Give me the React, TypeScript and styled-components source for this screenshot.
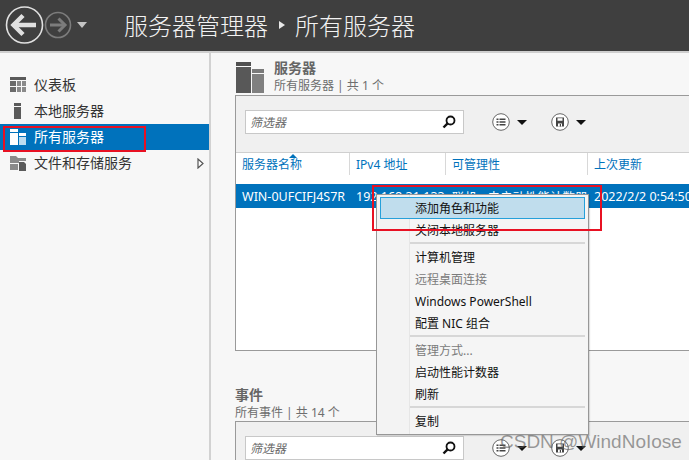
import React from 'react';
import styled, { createGlobalStyle } from 'styled-components';

const FONT = '"Noto Sans", "Noto Sans CJK SC", sans-serif';

const GlobalStyle = createGlobalStyle`
  html, body {
    margin: 0;
    padding: 0;
    background: #f7f7f7;
  }
  * {
    box-sizing: border-box;
  }
`;

const NAV_ITEMS = [
  { label: '仪表板', icon: 'dashboard' },
  { label: '本地服务器', icon: 'local' },
  { label: '所有服务器', icon: 'all', active: true },
  { label: '文件和存储服务', icon: 'files', arrow: true },
];

const COLUMNS = [
  { label: '服务器名称', width: 114, sorted: true },
  { label: 'IPv4 地址', width: 96 },
  { label: '可管理性', width: 142 },
  { label: '上次更新', width: 110 },
];

const CELLS = [
  { text: 'WIN-0UFCIFJ4S7R', width: 114 },
  { text: '192.168.31.133', width: 96 },
  { text: '联机 - 未启动性能计数器', width: 142 },
  { text: '2022/2/2 0:54:50', width: 110 },
];

const MENU = [
  { label: '添加角色和功能', highlighted: true },
  { label: '关闭本地服务器' },
  { divider: true },
  { label: '计算机管理' },
  { label: '远程桌面连接', disabled: true },
  { label: 'Windows PowerShell' },
  { label: '配置 NIC 组合' },
  { divider: true },
  { label: '管理方式...', disabled: true },
  { label: '启动性能计数器' },
  { label: '刷新' },
  { divider: true },
  { label: '复制' },
];

const NavIcon = ({ type, active }: { type: string; active?: boolean }) => {
  const dark = active ? '#ffffff' : '#5a5a5a';
  const soft = active ? '#bcdcf0' : '#7d7d7d';
  if (type === 'dashboard') {
    return (
      <svg width="16" height="16" viewBox="0 0 16 16">
        <rect y="0" width="16" height="3" fill="#5a5a5a" />
        <rect y="4" width="6" height="5" fill="#6a6a6a" />
        <rect x="7" y="4" width="4" height="5" fill="#8a8a8a" />
        <rect x="12" y="4" width="4" height="5" fill="#8a8a8a" />
        <rect y="10" width="6" height="5" fill="#6a6a6a" />
        <rect x="7" y="10" width="4" height="5" fill="#8a8a8a" />
        <rect x="12" y="10" width="4" height="5" fill="#8a8a8a" />
      </svg>
    );
  }
  if (type === 'local') {
    return (
      <svg width="16" height="16" viewBox="0 0 16 16">
        <rect x="4" y="0" width="7" height="3" fill="#5a5a5a" />
        <rect x="4" y="4" width="7" height="12" fill="#5a5a5a" />
      </svg>
    );
  }
  if (type === 'all') {
    return (
      <svg width="16" height="16" viewBox="0 0 16 16">
        <rect x="0" y="0" width="8" height="3" fill={dark} />
        <rect x="0" y="4" width="8" height="12" fill={dark} />
        <rect x="9" y="4" width="7" height="3" fill={dark} />
        <rect x="9" y="8" width="7" height="8" fill={soft} />
      </svg>
    );
  }
  return (
    <svg width="16" height="16" viewBox="0 0 16 16">
      <path d="M0 1h6l2 2h8v3H9v2H0z" fill="#8a8a8a" />
      <rect x="0" y="9" width="8" height="6" fill="#8a8a8a" />
      <path d="M9 7h5l2 2v7H9z" fill="#5a5a5a" />
    </svg>
  );
};

const ServerGlyph = () => (
  <svg width="29" height="31" viewBox="0 0 29 31">
    <rect x="0" y="0" width="15" height="4" fill="#505050" />
    <rect x="0" y="5" width="15" height="26" fill="#585858" />
    <rect x="16" y="7" width="12" height="4" fill="#7a7a7a" />
    <rect x="16" y="12" width="12" height="19" fill="#808080" />
  </svg>
);

const SearchGlyph = () => (
  <svg width="14" height="14" viewBox="0 0 14 14">
    <circle cx="8.5" cy="5.5" r="4" fill="none" stroke="#111" strokeWidth="1.8" />
    <path d="M5.6 8.4 1.5 12.5" stroke="#111" strokeWidth="2.4" />
  </svg>
);

const ListGlyph = () => (
  <svg width="18" height="18" viewBox="0 0 18 18">
    <circle cx="9" cy="9" r="8.3" fill="#fff" stroke="#666" strokeWidth="1" />
    <path d="M4.5 5.5h2v1.6h-2zM4.5 8.2h2v1.6h-2zM4.5 10.9h2v1.6h-2zM7.5 5.5h6v1.6h-6zM7.5 8.2h6v1.6h-6zM7.5 10.9h6v1.6h-6z" fill="#444" />
  </svg>
);

const SaveGlyph = () => (
  <svg width="18" height="18" viewBox="0 0 18 18">
    <circle cx="9" cy="9" r="8.3" fill="#fff" stroke="#666" strokeWidth="1" />
    <path d="M5 4.5h8v9h-8z" fill="#444" />
    <path d="M6.5 5.2h5v2.6h-5zM7 10.5h4v3H7z" fill="#fff" />
    <path d="M8.8 11h1.2v2.5H8.8z" fill="#444" />
  </svg>
);

const ArrowGlyph = () => (
  <svg width="7" height="11" viewBox="0 0 7 11">
    <path d="M1 1v9l5-4.5z" fill="#fff" stroke="#555" strokeWidth="1.2" />
  </svg>
);

const Toolbar = () => (
  <ToolbarRow>
    <SearchBox>
      <FilterText>筛选器</FilterText>
      <SearchGlyph />
    </SearchBox>
    <ToolButton>
      <ListGlyph />
      <Caret />
    </ToolButton>
    <ToolButton>
      <SaveGlyph />
      <Caret />
    </ToolButton>
  </ToolbarRow>
);

export default function App() {
  return (
    <Page>
      <GlobalStyle />
      <Header>
        <svg width="88" height="40" viewBox="0 0 88 40">
          <circle cx="24.5" cy="20" r="18" fill="none" stroke="#e0e0e0" strokeWidth="1.6" />
          <path d="M13 20h23" stroke="#e0e0e0" strokeWidth="4.5" />
          <path d="M23 10.5 13.5 20l9.5 9.5" fill="none" stroke="#e0e0e0" strokeWidth="4.5" />
          <circle cx="58" cy="20" r="12.5" fill="none" stroke="#7c7c7c" strokeWidth="1.6" />
          <path d="M50 20h15" stroke="#7c7c7c" strokeWidth="3" />
          <path d="M58.5 13.5 65 20l-6.5 6.5" fill="none" stroke="#7c7c7c" strokeWidth="3" />
          <path d="M77 17h10l-5 6z" fill="#c4c4c4" />
        </svg>
        <HeaderTitle>
          服务器管理器
          <Crumb />
          所有服务器
        </HeaderTitle>
      </Header>
      <Body>
        <Sidebar>
          {NAV_ITEMS.map((item) => (
            <NavRow key={item.label} $active={item.active}>
              <NavIconSlot>
                <NavIcon type={item.icon} active={item.active} />
              </NavIconSlot>
              {item.label}
              {item.arrow && (
                <NavArrow>
                  <ArrowGlyph />
                </NavArrow>
              )}
            </NavRow>
          ))}
        </Sidebar>
        <Main>
          <SectionHead>
            <ServerGlyph />
            <SectionText>
              <SectionTitle>服务器</SectionTitle>
              <SectionSub>所有服务器 | 共 1 个</SectionSub>
            </SectionText>
          </SectionHead>
          <Panel>
            <Toolbar />
            <ColumnRow>
              {COLUMNS.map((col) => (
                <ColumnCell key={col.label} $width={col.width}>
                  {col.sorted && <SortMark />}
                  {col.label}
                </ColumnCell>
              ))}
            </ColumnRow>
            <DataRow>
              {CELLS.map((cell) => (
                <DataCell key={cell.text} $width={cell.width}>
                  {cell.text}
                </DataCell>
              ))}
            </DataRow>
          </Panel>
          <LowerHead>
            <SectionTitle>事件</SectionTitle>
            <SectionSub>所有事件 | 共 14 个</SectionSub>
          </LowerHead>
          <LowerPanel>
            <Toolbar />
          </LowerPanel>
        </Main>
      </Body>
      <ContextMenu>
        {MENU.map((item, i) =>
          item.divider ? (
            <MenuDivider key={i} />
          ) : (
            <MenuItem key={i} $highlighted={item.highlighted} $disabled={item.disabled}>
              {item.label}
            </MenuItem>
          ),
        )}
      </ContextMenu>
      <SidebarMark />
      <MenuMark />
      <Watermark>CSDN @WindNoIose</Watermark>
    </Page>
  );
}

const Page = styled.div`
  position: relative;
  width: 689px;
  height: 460px;
  overflow: hidden;
  display: flex;
  flex-direction: column;
  background: #f7f7f7;
  font-family: ${FONT};
  font-size: 12px;
  color: #222;
`;

const Header = styled.header`
  flex: none;
  height: 53px;
  padding: 0 0 2px 0;
  display: flex;
  align-items: center;
  gap: 36px;
  background: #3f3f3f;
  border-bottom: 2px solid #cfcfcf;
`;

const HeaderTitle = styled.div`
  display: flex;
  align-items: center;
  font-size: 24px;
  font-weight: 300;
  color: #f2f2f2;
`;

const Crumb = styled.span`
  width: 0;
  height: 0;
  margin: 0 10px 0 11px;
  border-left: 6px solid #e8e8e8;
  border-top: 4px solid transparent;
  border-bottom: 4px solid transparent;
`;

const Body = styled.div`
  flex: 1;
  min-height: 0;
  display: flex;
`;

const Sidebar = styled.nav`
  flex: none;
  width: 211px;
  padding-top: 19px;
  background: #f7f7f7;
  border-right: 2px solid #d2d2d2;
`;

const NavRow = styled.div<{ $active?: boolean }>`
  position: relative;
  height: 26px;
  display: flex;
  align-items: center;
  padding: 0 0 2px 10px;
  font-size: 14px;
  background: ${(p) => (p.$active ? '#0072bc' : 'transparent')};
  color: ${(p) => (p.$active ? '#ffffff' : '#333333')};
`;

const NavIconSlot = styled.span`
  flex: none;
  width: 24px;
  height: 16px;
  margin-top: 2px;
  display: flex;
`;

const NavArrow = styled.span`
  position: absolute;
  right: 5px;
  top: 8px;
  display: flex;
`;

const Main = styled.main`
  flex: 1;
  min-width: 0;
  padding: 9px 0 0 24px;
  background: #f7f7f7;
`;

const SectionHead = styled.div`
  height: 33px;
  padding-left: 1px;
  display: flex;
  gap: 9px;
`;

const SectionText = styled.div`
  display: flex;
  flex-direction: column;
  margin-top: -2px;
`;

const SectionTitle = styled.div`
  height: 18px;
  line-height: 16px;
  font-size: 14px;
  font-weight: 700;
  color: #666666;
`;

const SectionSub = styled.div`
  height: 16px;
  line-height: 16px;
  font-size: 12px;
  color: #6e6e6e;
`;

const Panel = styled.section`
  height: 256px;
  background: #ffffff;
  border: 1px solid #9a9a9a;
  border-right: none;
`;

const ToolbarRow = styled.div`
  height: 57px;
  padding: 14px 0 0 9px;
  display: flex;
  align-items: flex-start;
  background: #f0f0f0;
  border-bottom: 1px solid #cfcfcf;
`;

const SearchBox = styled.div`
  width: 219px;
  height: 24px;
  margin-right: 28px;
  padding: 0 7px 0 4px;
  display: flex;
  align-items: center;
  justify-content: space-between;
  background: #ffffff;
  border: 1px solid #c8c8c8;
`;

const FilterText = styled.span`
  font-style: italic;
  color: #6a6a6a;
`;

const ToolButton = styled.div`
  width: 59px;
  height: 24px;
  display: flex;
  align-items: center;
  gap: 7px;
`;

const Caret = styled.span`
  width: 0;
  height: 0;
  border-top: 5px solid #111;
  border-left: 5px solid transparent;
  border-right: 5px solid transparent;
`;

const ColumnRow = styled.div`
  height: 31px;
  display: flex;
  background: #ffffff;
`;

const ColumnCell = styled.div<{ $width: number }>`
  position: relative;
  flex: none;
  width: ${(p) => p.$width}px;
  height: 22px;
  padding-left: 6px;
  display: flex;
  align-items: center;
  white-space: nowrap;
  color: #0072bc;
  border-right: 1px solid #d8d8d8;

  &:last-child {
    border-right: none;
  }
`;

const SortMark = styled.span`
  position: absolute;
  left: 53px;
  top: 1px;
  width: 0;
  height: 0;
  border-bottom: 4px solid #0072bc;
  border-left: 4px solid transparent;
  border-right: 4px solid transparent;
`;

const DataRow = styled.div`
  height: 24px;
  padding-top: 1px;
  display: flex;
  align-items: center;
  background: #0072bc;
  color: #ffffff;
  font-size: 12.5px;
`;

const DataCell = styled.div<{ $width: number }>`
  flex: none;
  width: ${(p) => p.$width}px;
  padding-left: 6px;
  white-space: nowrap;
  overflow: hidden;
`;

const LowerHead = styled.div`
  height: 34px;
  margin-top: 36px;
`;

const LowerPanel = styled.section`
  height: 60px;
  background: #f0f0f0;
  border: 1px solid #9a9a9a;
  border-right: none;
`;

const ContextMenu = styled.div`
  position: absolute;
  left: 376px;
  top: 194px;
  width: 213px;
  padding: 2px 3px;
  background: linear-gradient(to right, #f3f3f3 32px, #e6e6e6 32px, #e6e6e6 33px, #f5f5f5 33px);
  border: 1px solid #979797;
  box-shadow: 1px 1px 1px rgba(0, 0, 0, 0.12);
`;

const MenuItem = styled.div<{ $highlighted?: boolean; $disabled?: boolean }>`
  height: 22px;
  line-height: 21px;
  padding-left: 34px;
  white-space: nowrap;
  color: ${(p) => (p.$disabled ? '#7b7b7b' : '#111111')};
  background: ${(p) => (p.$highlighted ? '#c0dded' : 'transparent')};
  border: 1px solid ${(p) => (p.$highlighted ? '#26a0da' : 'transparent')};
`;

const MenuDivider = styled.div`
  height: 2px;
  margin: 1px 0 2px 30px;
  background: #d7d7d7;
`;

const SidebarMark = styled.div`
  position: absolute;
  left: 3px;
  top: 126px;
  width: 143px;
  height: 26px;
  border: 2px solid #e81123;
`;

const MenuMark = styled.div`
  position: absolute;
  left: 372px;
  top: 185px;
  width: 230px;
  height: 46px;
  border: 2px solid #e81123;
`;

const Watermark = styled.div`
  position: absolute;
  left: 500px;
  top: 431px;
  font-family: "Liberation Sans", sans-serif;
  font-size: 19px;
  white-space: nowrap;
  color: rgba(90, 90, 90, 0.6);
`;
